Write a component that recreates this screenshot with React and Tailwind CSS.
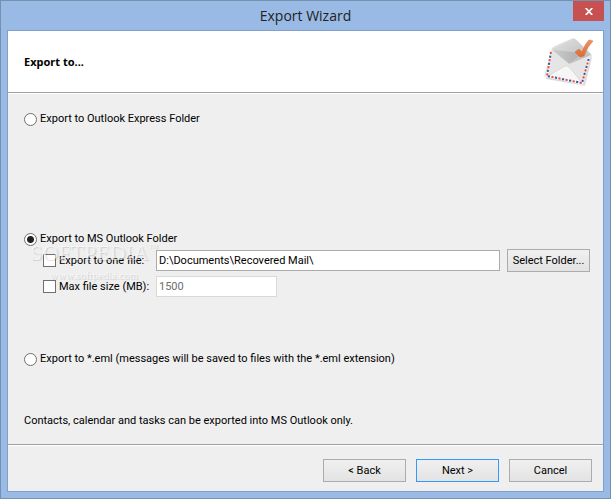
import React from 'react';

const EnvelopeIcon = () => (
  <svg className="w-[52px] h-[52px]" viewBox="2 1 52 52" aria-hidden="true">
    <defs>
      <linearGradient id="flap" x1="0" y1="0" x2="1" y2="1">
        <stop offset="0" stopColor="#e2e2e2" />
        <stop offset="1" stopColor="#b8b8b8" />
      </linearGradient>
      <linearGradient id="shade" x1="0" y1="0" x2="1" y2="0">
        <stop offset="0" stopColor="#cdcdcd" />
        <stop offset="1" stopColor="#acacac" />
      </linearGradient>
      <linearGradient id="tick" x1="0" y1="0" x2="0" y2="1">
        <stop offset="0" stopColor="#f09468" />
        <stop offset="1" stopColor="#e2682f" />
      </linearGradient>
    </defs>
    <path d="M5 42 L41 50 L50 22 L51 23 L44 51 L5 44 Z" fill="#000" opacity="0.12" />
    <path d="M11 15 Q11 13 13 12 L31 4 Q33 3 35 5 L49 18 Q51 20 50 22 L43 48 Q42 50 40 49 L6 43 Q4 42 4 40 Z" fill="#ececec" stroke="#c8c8c8" strokeWidth="0.6" />
    <path d="M11 14 L32 4 Q33 3 35 5 L50 20 L29 29 Z" fill="url(#flap)" />
    <path d="M11 15 L42 18 L28 29 Z" fill="url(#shade)" />
    <path d="M11 15 L28 29 L50 21 L43 49 L5 42 Z" fill="#e5e5e5" />
    <path d="M5 42 L24 31 Q27 30 29 33 L42 49 Z" fill="#f6f6f6" />
    <path d="M5 42 L24 31 Q27 30 29 33 L42 49" fill="none" stroke="#d6d6d6" strokeWidth="0.8" />
    <g fill="none" strokeWidth="2">
      <path d="M10 17 L6 41 L41 48 L48 23" stroke="#fafafa" strokeWidth="2.6" />
      <path d="M10 17 L6 41 L41 48 L48 23" stroke="#ee4b3c" strokeDasharray="2.2 5" />
      <path d="M10 17 L6 41 L41 48 L48 23" stroke="#2f5fa6" strokeDasharray="2.2 5" strokeDashoffset="-3.6" />
    </g>
    <path d="M34 17 L38 14 L41 17 Q44 9 48 5 L52 6 Q46 12 43 21 L39 22 Z" fill="url(#tick)" stroke="#d9622e" strokeWidth="0.5" />
  </svg>
);

const radioClass =
  'appearance-none shrink-0 w-[13px] h-[13px] rounded-full border border-[#707070] bg-white checked:bg-[radial-gradient(circle,#202020_0_3px,#fff_4px)]';
const checkClass =
  'appearance-none shrink-0 w-[13px] h-[13px] border border-[#707070] bg-white checked:bg-[#202020] checked:shadow-[inset_0_0_0_2px_#fff]';
const buttonClass =
  'w-[83px] h-[23px] shrink-0 border bg-linear-to-b from-[#f0f0f0] to-[#e3e3e3] whitespace-nowrap';

const Option = ({ label, ...rest }) => (
  <label className="flex items-center gap-[3px] h-4 w-fit">
    <input type="radio" name="target" className={radioClass} {...rest} />
    {label}
  </label>
);

const Watermark = () => (
  <div
    className="absolute left-1.5 top-2 w-32 text-center text-white/60 pointer-events-none select-none font-['Liberation_Serif',serif] [text-shadow:1px_1px_1px_rgba(0,0,0,0.14)]"
    aria-hidden="true"
  >
    <div className="flex justify-center text-[22px] leading-[28px]">
      SOFTPEDIA<span className="text-[6px] leading-[14px]">TM</span>
    </div>
    <div className="text-[11px] leading-4">www.softpedia.com</div>
  </div>
);

const App = () => (
  <div className="min-h-screen flex flex-col border border-[#7590b1] bg-[#9abae6] px-1.5 pb-1.5 font-[Roboto,sans-serif] text-[11px] leading-4 text-black">
    <header className="relative h-[29px] flex items-center justify-center">
      <h1 className="font-['Open_Sans',sans-serif] text-[14px] leading-5 text-[#222]">Export Wizard</h1>
      <button
        type="button"
        aria-label="Close"
        className="absolute right-0 top-0 w-[31px] h-5 bg-[#c75050] flex items-center justify-center"
      >
        <svg className="w-2 h-[7px]" viewBox="0 0 8 7" stroke="#fff" strokeWidth="1.7" aria-hidden="true">
          <path d="M0.7 0 L7.3 7 M7.3 0 L0.7 7" />
        </svg>
      </button>
    </header>

    <main className="flex-1 flex flex-col border border-[#829fc8] bg-[#efefef]">
      <div className="h-[61px] flex items-center justify-between bg-white pl-4 pr-2">
        <h2 className="font-['Noto_Sans',sans-serif] font-bold">Export to...</h2>
        <EnvelopeIcon />
      </div>
      <div className="border-t border-[#a0a0a0] border-b border-b-white" />

      <form className="flex-1 flex flex-col pl-4 pr-[13px] pt-[17px] pb-3.5">
        <Option label="Export to Outlook Express Folder" />

        <div className="relative mt-[104px]">
          <Option label="Export to MS Outlook Folder" defaultChecked />
          <div className="mt-0.5 ml-[19px] grid grid-cols-[113px_1fr] gap-y-1 items-center">
            <label className="flex items-center gap-[3px] whitespace-nowrap">
              <input type="checkbox" className={checkClass} />
              Export to one file:
            </label>
            <div className="flex items-center gap-[7px]">
              <input
                type="text"
                aria-label="Export folder"
                defaultValue={'D:\\Documents\\Recovered Mail\\'}
                className="flex-1 min-w-0 h-[21px] border border-[#ababab] bg-white px-0.5"
              />
              <button type="button" className={`${buttonClass} border-[#acacac]`}>Select Folder...</button>
            </div>
            <label className="flex items-center gap-[3px] whitespace-nowrap">
              <input type="checkbox" className={checkClass} />
              Max file size (MB):
            </label>
            <input
              type="text"
              aria-label="Max file size in MB"
              defaultValue="1500"
              disabled
              className="w-[121px] h-[21px] border border-[#d9d9d9] bg-white px-0.5 text-[#6d6d6d]"
            />
          </div>
          <Watermark />
        </div>

        <div className="mt-[54px]">
          <Option label="Export to *.eml (messages will be saved to files with the *.eml extension)" />
        </div>
        <p className="mt-[46px]">Contacts, calendar and tasks can be exported into MS Outlook only.</p>
      </form>

      <div className="border-t border-[#a0a0a0] border-b border-b-white" />
      <footer className="flex justify-end gap-2.5 pt-[13px] pb-[9px] pr-[11px]">
        <button type="button" className={`${buttonClass} border-[#acacac]`}>&lt; Back</button>
        <button type="button" className={`${buttonClass} border-[#3399ff]`}>Next &gt;</button>
        <button type="button" className={`${buttonClass} border-[#acacac]`}>Cancel</button>
      </footer>
    </main>
  </div>
);

export default App;
